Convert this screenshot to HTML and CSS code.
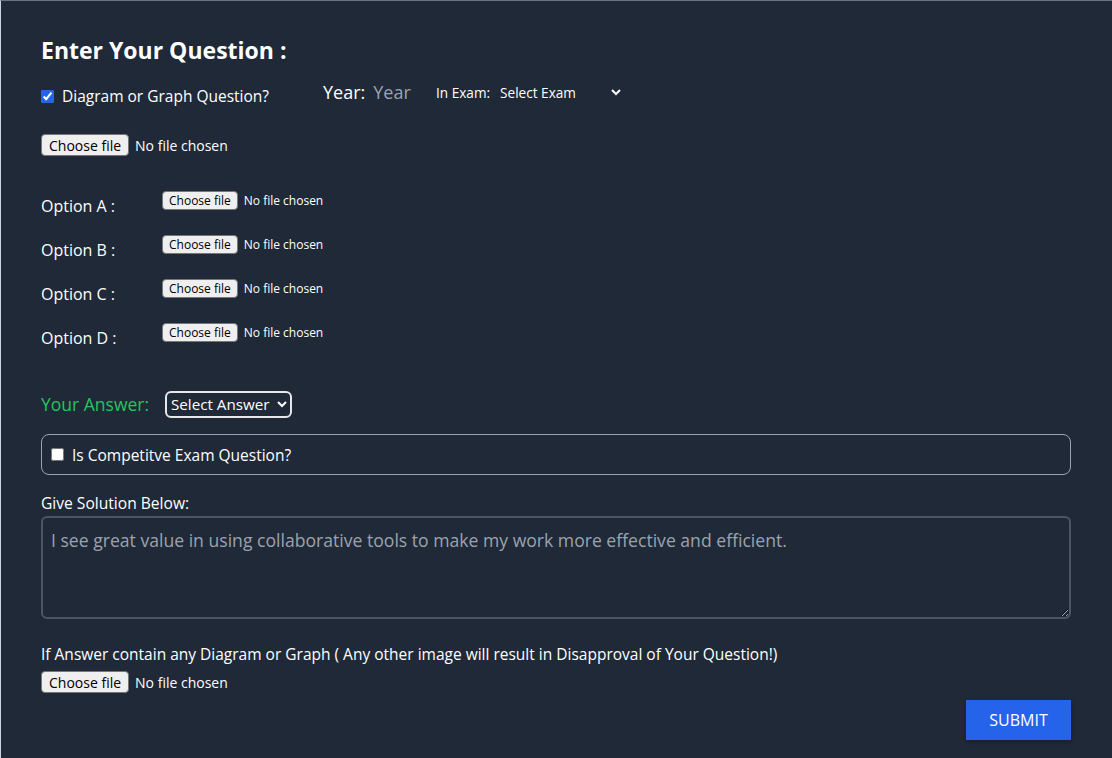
FILE: index.html
```html
<!DOCTYPE html>
<html>
<head>
<meta charset="utf-8">
<link rel="stylesheet" href="styles.css">
</head>
<body>
<div class="page">
  <h1 class="title">Enter Your Question :</h1>
  <div class="row-top">
    <label class="check-label"><input type="checkbox" class="check" checked> Diagram or Graph Question?</label>
    <div class="year">
      <span class="year-label">Year:</span>
      <input type="text" class="year-input" placeholder="Year">
    </div>
    <div class="exam">
      <span class="exam-label">In Exam:</span>
      <select class="exam-select"><option>Select Exam</option></select>
    </div>
  </div>
  <label class="file-picker file-main"><input type="file" class="file-hidden"><span class="file-btn">Choose file</span><span class="file-name">No file chosen</span></label>
  <div class="options">
    <div class="opt"><span class="opt-label">Option A :</span><label class="file-picker sm"><input type="file" class="file-hidden"><span class="file-btn">Choose file</span><span class="file-name">No file chosen</span></label></div>
    <div class="opt"><span class="opt-label">Option B :</span><label class="file-picker sm"><input type="file" class="file-hidden"><span class="file-btn">Choose file</span><span class="file-name">No file chosen</span></label></div>
    <div class="opt"><span class="opt-label">Option C :</span><label class="file-picker sm"><input type="file" class="file-hidden"><span class="file-btn">Choose file</span><span class="file-name">No file chosen</span></label></div>
    <div class="opt"><span class="opt-label">Option D :</span><label class="file-picker sm"><input type="file" class="file-hidden"><span class="file-btn">Choose file</span><span class="file-name">No file chosen</span></label></div>
  </div>
  <div class="answer">
    <span class="answer-label">Your Answer:</span>
    <select class="answer-select"><option>Select Answer</option></select>
  </div>
  <label class="competitive"><input type="checkbox" class="check"> Is Competitve Exam Question?</label>
  <div class="sol-label">Give Solution Below:</div>
  <textarea class="solution" placeholder="I see great value in using collaborative tools to make my work more effective and efficient."></textarea>
  <div class="diag-label">If Answer contain any Diagram or Graph ( Any other image will result in Disapproval of Your Question!)</div>
  <label class="file-picker file-bottom"><input type="file" class="file-hidden"><span class="file-btn">Choose file</span><span class="file-name">No file chosen</span></label>
  <div class="submit-row"><button class="submit">SUBMIT</button></div>
</div>
</body>
</html>
```
FILE: styles.css
```css
html, body { margin: 0; padding: 0; }
body {
  background: #1f2937;
  font-family: "Open Sans", "Noto Sans", sans-serif;
  color: #ffffff;
}
.page {
  box-sizing: border-box;
  min-height: 758px;
  border-left: 1px solid #cbd5e1;
  border-top: 1px solid #6b7280;
  padding: 33px 41px 18px 40px;
  background: #1f2937;
}
.title {
  margin: 0;
  font-size: 23px;
  line-height: 32px;
  font-weight: 700;
  color: #fff;
}
.row-top {
  display: flex;
  align-items: center;
  margin-top: 10px;
  height: 32px;
}
.check {
  width: 13px;
  height: 13px;
  margin: 0 8px 0 0;
  accent-color: #2563eb;
}
.check-label {
  display: flex;
  align-items: center;
  font-size: 15.5px;
  width: 282px;
  padding-top: 8px;
}
.year { display: flex; align-items: center; width: 113px; }
.year-label { font-size: 18px; margin-right: 8px; }
.year-input {
  background: transparent;
  border: none;
  outline: none;
  color: #fff;
  font: inherit;
  font-size: 18px;
  width: 60px;
  padding: 0;
}
.year-input::placeholder { color: #9ca3af; }
.exam { display: flex; align-items: center; font-size: 13.6px; }
.exam-label { margin-right: 6px; }
.exam-select {
  background: transparent;
  color: #fff;
  border: none;
  font: inherit;
  font-size: 13.6px;
  width: 128px;
  outline: none;
}
.file-hidden { display: none; }
.file-picker {
  display: flex;
  align-items: center;
  font-size: 14px;
}
.file-btn {
  box-sizing: border-box;
  height: 22px;
  display: flex;
  align-items: center;
  padding: 0 7px;
  background: #efefef;
  color: #000;
  border: 1px solid #767676;
  border-radius: 4px;
  font-size: 14px;
}
.file-name { margin-left: 6px; color: #fff; }
.file-picker.sm { font-size: 12px; }
.file-picker.sm .file-btn { height: 19px; font-size: 12px; padding: 0 6px; }
.file-main { margin-top: 26px; height: 22px; }
.options { margin-top: 35px; }
.opt { display: flex; align-items: flex-start; height: 44px; }
.opt-label { font-size: 16px; line-height: 22px; width: 121px; padding-top: 4px; }
.answer {
  margin-top: 24px;
  display: flex;
  align-items: center;
  height: 26px;
}
.answer-label { color: #22c55e; font-size: 17.5px; width: 124px; }
.answer-select {
  box-sizing: border-box;
  background: transparent;
  color: #fff;
  border: 2px solid #e5e7eb;
  border-radius: 6px;
  font: inherit;
  font-size: 15.2px;
  width: 127px;
  height: 27px;
  padding: 0;
}
.competitive {
  box-sizing: border-box;
  margin-top: 17px;
  display: flex;
  align-items: center;
  height: 41px;
  border: 1px solid #9ca3af;
  border-radius: 8px;
  padding-left: 9px;
  font-size: 15.5px;
}
.sol-label { margin-top: 18px; font-size: 15.6px; line-height: 20px; }
.solution {
  display: block;
  box-sizing: border-box;
  margin-top: 3px;
  width: 100%;
  height: 103px;
  background: transparent;
  border: 2px solid #4b5563;
  border-radius: 6px;
  padding: 10px 8px;
  font-family: inherit;
  font-size: 17.6px;
  color: #fff;
  resize: vertical;
}
.solution::placeholder { color: #9ca3af; }
.diag-label { margin-top: 24px; font-size: 15.5px; line-height: 22px; }
.file-bottom { margin-top: 6px; height: 22px; }
.submit-row { display: flex; justify-content: flex-end; margin-top: 7px; }
.submit {
  background: #2563eb;
  color: #fff;
  border: none;
  font-family: inherit;
  font-size: 16px;
  width: 105px;
  height: 40px;
  box-shadow: 0 2px 4px rgba(0,0,0,0.25);
}
```
